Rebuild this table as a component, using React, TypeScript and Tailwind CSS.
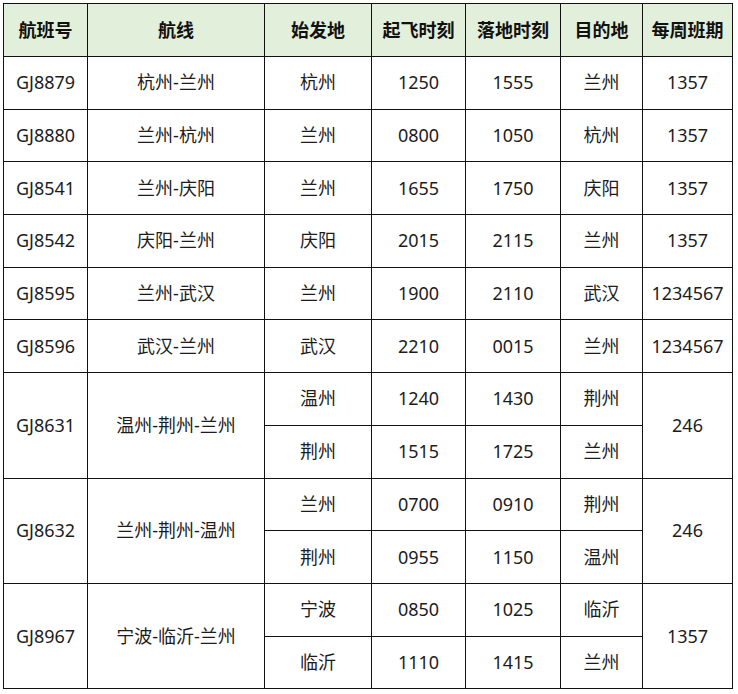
import React from "react";

type Row = {
  no: string;
  route: string;
  legs: { from: string; dep: string; arr: string; to: string }[];
  days: string;
};

const rows: Row[] = [
  { no: "GJ8879", route: "杭州-兰州", legs: [{ from: "杭州", dep: "1250", arr: "1555", to: "兰州" }], days: "1357" },
  { no: "GJ8880", route: "兰州-杭州", legs: [{ from: "兰州", dep: "0800", arr: "1050", to: "杭州" }], days: "1357" },
  { no: "GJ8541", route: "兰州-庆阳", legs: [{ from: "兰州", dep: "1655", arr: "1750", to: "庆阳" }], days: "1357" },
  { no: "GJ8542", route: "庆阳-兰州", legs: [{ from: "庆阳", dep: "2015", arr: "2115", to: "兰州" }], days: "1357" },
  { no: "GJ8595", route: "兰州-武汉", legs: [{ from: "兰州", dep: "1900", arr: "2110", to: "武汉" }], days: "1234567" },
  { no: "GJ8596", route: "武汉-兰州", legs: [{ from: "武汉", dep: "2210", arr: "0015", to: "兰州" }], days: "1234567" },
  {
    no: "GJ8631",
    route: "温州-荆州-兰州",
    legs: [
      { from: "温州", dep: "1240", arr: "1430", to: "荆州" },
      { from: "荆州", dep: "1515", arr: "1725", to: "兰州" },
    ],
    days: "246",
  },
  {
    no: "GJ8632",
    route: "兰州-荆州-温州",
    legs: [
      { from: "兰州", dep: "0700", arr: "0910", to: "荆州" },
      { from: "荆州", dep: "0955", arr: "1150", to: "温州" },
    ],
    days: "246",
  },
  {
    no: "GJ8967",
    route: "宁波-临沂-兰州",
    legs: [
      { from: "宁波", dep: "0850", arr: "1025", to: "临沂" },
      { from: "临沂", dep: "1110", arr: "1415", to: "兰州" },
    ],
    days: "1357",
  },
];

const headers = ["航班号", "航线", "始发地", "起飞时刻", "落地时刻", "目的地", "每周班期"];
const widths = ["w-[84px]", "w-[177px]", "w-[107px]", "w-[94px]", "w-[95px]", "w-[82px]", "w-[90px]"];

const cell = "border-[1.5px] border-[#111] text-center align-middle p-0";

export default function App() {
  return (
    <div className="w-[738px] h-[694px] bg-white pt-[3px] pl-[3px]">
      <table
        className="table-fixed border-collapse text-[18px] text-[#1c1c1c] w-[729px]"
        style={{ fontFamily: '"Noto Sans", "Noto Sans CJK SC", sans-serif' }}
      >
        <colgroup>
          {widths.map((w, i) => (
            <col key={i} className={w} />
          ))}
        </colgroup>
        <thead>
          <tr className="h-[53px] bg-[#e2efda]">
            {headers.map((h) => (
              <th key={h} className={`${cell} font-bold text-[#111]`}>
                {h}
              </th>
            ))}
          </tr>
        </thead>
        <tbody>
          {rows.map((r) =>
            r.legs.map((leg, i) => (
              <tr key={r.no + i} className="h-[52.7px]">
                {i === 0 && (
                  <>
                    <td className={cell} rowSpan={r.legs.length}>{r.no}</td>
                    <td className={cell} rowSpan={r.legs.length}>{r.route}</td>
                  </>
                )}
                <td className={cell}>{leg.from}</td>
                <td className={cell}>{leg.dep}</td>
                <td className={cell}>{leg.arr}</td>
                <td className={cell}>{leg.to}</td>
                {i === 0 && (
                  <td className={cell} rowSpan={r.legs.length}>{r.days}</td>
                )}
              </tr>
            ))
          )}
        </tbody>
      </table>
    </div>
  );
}
